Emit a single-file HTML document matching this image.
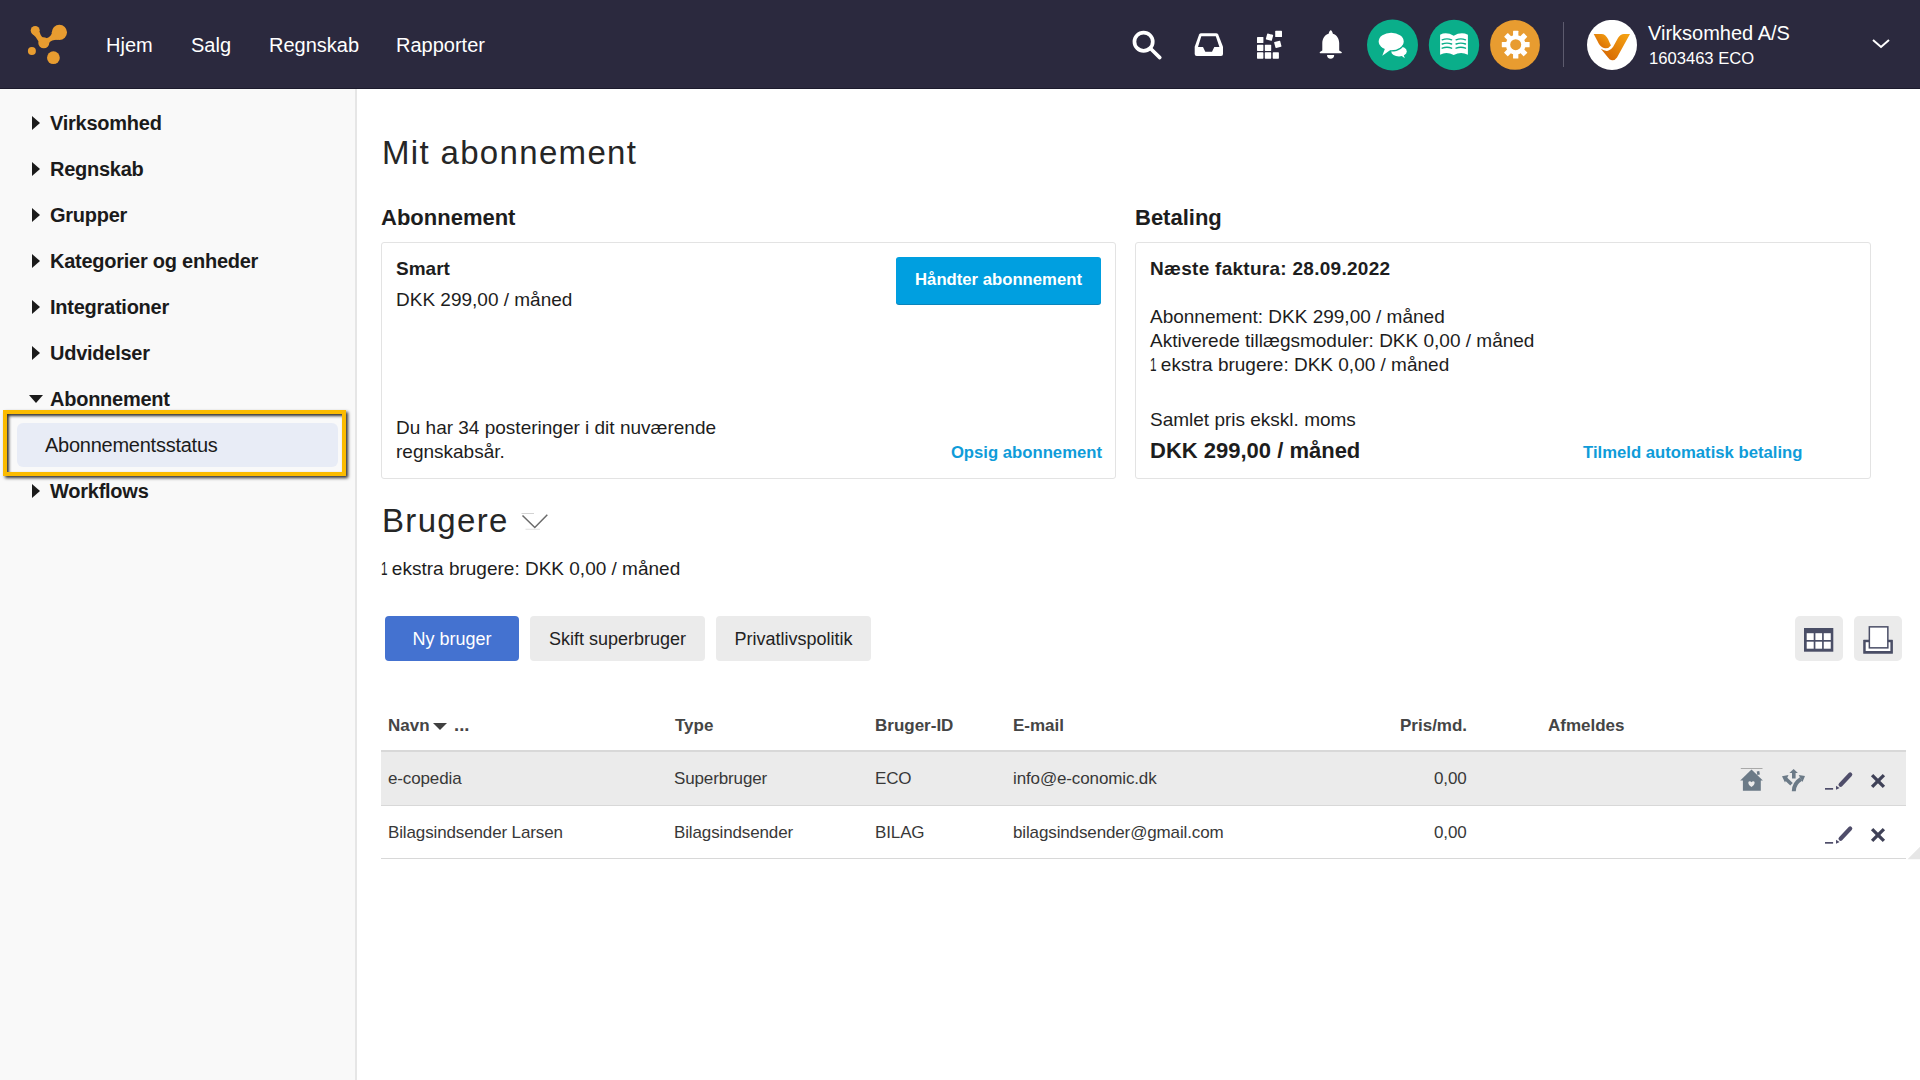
<!DOCTYPE html>
<html><head><meta charset="utf-8">
<style>
*{box-sizing:border-box;margin:0;padding:0}
html,body{width:1920px;height:1080px;overflow:hidden;background:#fff;font-family:"Liberation Sans",sans-serif;color:#1f1f1f}
.abs{position:absolute;white-space:nowrap}
#hdr{position:absolute;left:0;top:0;width:1920px;height:89px;background:#2b293e;border-bottom:1px solid #1c1a2c}
.nav{position:absolute;top:33px;font-size:20px;color:#fff;line-height:24px}
#side{position:absolute;left:0;top:89px;width:357px;height:991px;background:#f9f9f9;border-right:2px solid #e6e6e6}
.si{position:absolute;left:50px;font-size:20px;font-weight:bold;color:#1b1b1b;line-height:24px;letter-spacing:-0.25px}
.tri{position:absolute;left:32px;width:0;height:0;border-top:7px solid transparent;border-bottom:7px solid transparent;border-left:8px solid #1b1b1b}
.trid{position:absolute;left:28.5px;width:0;height:0;border-left:7.3px solid transparent;border-right:7.3px solid transparent;border-top:8.5px solid #1b1b1b}
.t{position:absolute;white-space:nowrap;line-height:24px}
.card{position:absolute;top:242px;height:237px;border:1px solid #e3e3e3;border-radius:3px;background:#fff}
.link{color:#0f9cd9;font-weight:bold;font-size:16.7px}
.btn{position:absolute;top:616px;height:45px;border-radius:4px;font-size:18px;line-height:47px;text-align:center}
.th{position:absolute;top:716px;font-size:17px;font-weight:bold;color:#454545;line-height:20px}
.td{position:absolute;font-size:17px;color:#383838;line-height:20px;letter-spacing:-0.13px}
</style></head>
<body>
<div id="hdr">
  <!-- logo -->
  <svg class="abs" style="left:20px;top:18px" width="56" height="52" viewBox="0 0 56 52">
    <g fill="#e89c30">
      <circle cx="15.2" cy="12.5" r="4.5"/>
      <circle cx="39.4" cy="14.3" r="7.6"/>
      <circle cx="23.8" cy="24.8" r="5.5"/>
      <circle cx="11.9" cy="33" r="4"/>
      <circle cx="33.4" cy="39.7" r="6.4"/>
      <path d="M12 15.5 Q16 18.5 18.6 23.5 L28.9 25 Q32 21.3 38.5 21.8 L32.2 13.5 Q31.6 18.5 26.5 20.3 Q21.5 21 19.6 14 Z"/>
    </g>
  </svg>
  <div class="nav" style="left:106px">Hjem</div>
  <div class="nav" style="left:191px">Salg</div>
  <div class="nav" style="left:269px">Regnskab</div>
  <div class="nav" style="left:396px">Rapporter</div>

  <!-- search -->
  <svg class="abs" style="left:1130px;top:28px" width="34" height="34" viewBox="0 0 34 34">
    <circle cx="13.6" cy="13.7" r="9.15" fill="none" stroke="#fff" stroke-width="3.7"/>
    <line x1="20.5" y1="20.5" x2="29.8" y2="29.6" stroke="#fff" stroke-width="3.6" stroke-linecap="round"/>
  </svg>
  <!-- inbox -->
  <svg class="abs" style="left:1192px;top:30px" width="34" height="30" viewBox="0 0 34 30">
    <path d="M9.3 3.2 H24 Q25.6 3.2 26.2 4.6 L31 16.7 V24 Q31 26 29 26 H4.7 Q2.7 26 2.7 24 V16.7 L7.1 4.6 Q7.7 3.2 9.3 3.2 Z" fill="#fff"/>
    <path d="M9.3 6.3 H23.8 L27.4 17 H22.3 L20 21.7 H13.3 L11 17 H6 Z" fill="#2b293e"/>
  </svg>
  <!-- grid -->
  <svg class="abs" style="left:1254px;top:29px" width="32" height="32" viewBox="0 0 32 32">
    <g fill="#fff">
      <rect x="3" y="8" width="6.4" height="6.1" rx="0.6"/>
      <rect x="3" y="15.8" width="6.4" height="6.1" rx="0.6"/>
      <rect x="3" y="23.3" width="6.4" height="6.4" rx="0.6"/>
      <rect x="10.8" y="15.8" width="6.4" height="6.1" rx="0.6"/>
      <rect x="10.8" y="23.3" width="6.4" height="6.4" rx="0.6"/>
      <rect x="18.7" y="23.3" width="6.2" height="6.4" rx="0.6"/>
      <rect x="21.2" y="1.7" width="6.8" height="6.3" rx="0.6"/>
      <rect x="12.4" y="5.1" width="6.2" height="6.2" rx="0.6" transform="rotate(15 15.5 8.2)"/>
      <rect x="20.7" y="12.2" width="6.2" height="6.2" rx="0.6" transform="rotate(-15 23.8 15.3)"/>
    </g>
  </svg>
  <!-- bell -->
  <svg class="abs" style="left:1316px;top:29px" width="30" height="32" viewBox="0 0 30 32">
    <path d="M12.6 4.7 C13.2 2.5 13.9 1.3 14.75 1.3 C15.6 1.3 16.3 2.5 16.9 4.7 C20.8 6 23.2 9.5 23.2 14 V21.5 L25.6 23 Q26.4 24.2 25 24.2 H4.5 Q3.1 24.2 3.9 23 L6.3 21.5 V14 C6.3 9.5 8.7 6 12.6 4.7 Z" fill="#fff"/>
    <path d="M11 26 H18.2 Q18 29.8 14.6 29.8 Q11.2 29.8 11 26 Z" fill="#fff"/>
  </svg>
  <!-- chat circle -->
  <svg class="abs" style="left:1366px;top:19px" width="54" height="52" viewBox="0 0 54 52">
    <circle cx="26.5" cy="26" r="25.5" fill="#0aae8a"/>
    <ellipse cx="33" cy="32.4" rx="7.75" ry="5" fill="#fff"/>
    <path d="M34.5 36 L38.8 39.3 L37.6 35.5 Z" fill="#fff"/>
    <ellipse cx="25.2" cy="22.5" rx="13.9" ry="10.1" fill="#0aae8a"/>
    <ellipse cx="25.2" cy="22.5" rx="12.5" ry="8.75" fill="#fff"/>
    <path d="M19 29.5 L16.3 36.8 L25 30.6 Z" fill="#fff"/>
  </svg>
  <!-- book circle -->
  <svg class="abs" style="left:1427px;top:19px" width="54" height="52" viewBox="0 0 54 52">
    <circle cx="27" cy="26" r="25.2" fill="#0aae8a"/>
    <path d="M13.1 15.7 Q19.5 12.5 26.7 16.8 Q33.9 12.5 40.9 15.7 V35.7 Q33.9 32.3 26.7 36 Q19.5 32.3 13.1 35.7 Z" fill="#fff"/>
    <g stroke="#0aae8a" stroke-width="1.4" fill="none" stroke-linecap="round">
      <path d="M15.2 20.8 Q20 19 24.6 20.8"/><path d="M15.2 25 Q20 23.2 24.6 25"/><path d="M15.2 29.2 Q20 27.4 24.6 29.2"/>
      <path d="M29.1 20.8 Q33.8 19 38.5 20.8"/><path d="M29.1 25 Q33.8 23.2 38.5 25"/><path d="M29.1 29.2 Q33.8 27.4 38.5 29.2"/>
    </g>
  </svg>
  <!-- gear circle -->
  <svg class="abs" style="left:1489px;top:19px" width="52" height="52" viewBox="0 0 52 52">
    <circle cx="26" cy="25.9" r="24.9" fill="#e89c30"/>
    <g fill="#fff" transform="translate(26.7 25.7)">
      <rect x="-2.65" y="-13.9" width="5.3" height="27.8" rx="0.5"/>
      <rect x="-2.65" y="-13.9" width="5.3" height="27.8" rx="0.5" transform="rotate(45)"/>
      <rect x="-2.65" y="-13.9" width="5.3" height="27.8" rx="0.5" transform="rotate(90)"/>
      <rect x="-2.65" y="-13.9" width="5.3" height="27.8" rx="0.5" transform="rotate(135)"/>
      <circle r="9.8"/>
      <circle r="5.5" fill="#e89c30"/>
    </g>
  </svg>
  <div class="abs" style="left:1563px;top:22px;width:1px;height:45px;background:#5d5b6e"></div>
  <!-- avatar -->
  <svg class="abs" style="left:1586px;top:20px" width="52" height="51" viewBox="0 0 52 51">
    <defs><linearGradient id="og" x1="1" y1="0" x2="0" y2="1"><stop offset="0" stop-color="#f7a614"/><stop offset="1" stop-color="#d25f00"/></linearGradient></defs>
    <circle cx="26" cy="24.9" r="25" fill="#fff"/>
    <path d="M7.7 13.9 H15.5 Q19.5 14 22 19 L24.9 25.5 Q23 28.5 19 28.2 Q15 27.5 13 24 Z" fill="url(#og)"/>
    <path d="M14.8 28.8 Q19 31.5 22 30.8 Q25 30 27 27 L32 18 Q34.5 14 38 13.9 H44 L31 37.5 Q29 40.5 26 40.2 Q23.5 40 22 37.5 Z" fill="url(#og)"/>
  </svg>
  <div class="abs" style="left:1648px;top:21px;font-size:20px;color:#fff;line-height:24px">Virksomhed A/S</div>
  <div class="abs" style="left:1649px;top:49px;font-size:16.6px;color:#fff;line-height:20px">1603463 ECO</div>
  <svg class="abs" style="left:1871px;top:37px" width="20" height="14" viewBox="0 0 20 14">
    <path d="M2 3 L10 10 L18 3" fill="none" stroke="#fff" stroke-width="2"/>
  </svg>
</div>

<div id="side">
  <div class="tri" style="top:27px"></div><div class="si" style="top:22px">Virksomhed</div>
  <div class="tri" style="top:73px"></div><div class="si" style="top:68px">Regnskab</div>
  <div class="tri" style="top:119px"></div><div class="si" style="top:114px">Grupper</div>
  <div class="tri" style="top:165px"></div><div class="si" style="top:160px">Kategorier og enheder</div>
  <div class="tri" style="top:211px"></div><div class="si" style="top:206px">Integrationer</div>
  <div class="tri" style="top:257px"></div><div class="si" style="top:252px">Udvidelser</div>
  <div class="trid" style="top:306px"></div><div class="si" style="top:298px">Abonnement</div>
  <div class="tri" style="top:395px"></div><div class="si" style="top:390px">Workflows</div>
</div>
<!-- highlight -->
<div class="abs" style="left:3px;top:410px;width:343px;height:66px;border:4px solid #fbbb00;box-shadow:2px 2px 3px rgba(0,0,0,.8), inset 2px 2px 3px rgba(0,0,0,.8);"></div>
<div class="abs" style="left:17px;top:423px;width:321px;height:44px;background:#e8ecf6;border-radius:6px"></div>
<div class="t" style="left:45px;top:433px;font-size:20px;letter-spacing:-0.25px;color:#1b1b1b">Abonnementsstatus</div>

<!-- main -->
<div class="t" style="left:382px;top:132px;font-size:33px;letter-spacing:1.33px;line-height:42px;color:#262626">Mit abonnement</div>
<div class="t" style="left:381px;top:206px;font-size:22px;font-weight:bold;color:#1d1d1d">Abonnement</div>
<div class="t" style="left:1135px;top:206px;font-size:22px;font-weight:bold;color:#1d1d1d">Betaling</div>

<div class="card" style="left:381px;width:735px"></div>
<div class="t" style="left:396px;top:257px;font-size:19px;font-weight:bold;color:#1d1d1d">Smart</div>
<div class="t" style="left:396px;top:288px;font-size:19px;color:#1d1d1d">DKK 299,00 / måned</div>
<div class="abs" style="left:896px;top:257px;width:205px;height:47px;background:#009fe0;border-radius:3px;box-shadow:0 1px 0 #0a84bb;color:#fff;font-weight:bold;font-size:16.7px;line-height:46px;text-align:center">Håndter abonnement</div>
<div class="t" style="left:396px;top:416px;font-size:19px;color:#1d1d1d">Du har 34 posteringer i dit nuværende</div>
<div class="t" style="left:396px;top:440px;font-size:19px;color:#1d1d1d">regnskabsår.</div>
<div class="t link" style="right:818px;top:441px">Opsig abonnement</div>

<div class="card" style="left:1135px;width:736px"></div>
<div class="t" style="left:1150px;top:257px;font-size:19px;font-weight:bold;letter-spacing:0.28px;color:#1d1d1d">Næste faktura: 28.09.2022</div>
<div class="t" style="left:1150px;top:305px;font-size:19px;color:#1d1d1d">Abonnement: DKK 299,00 / måned</div>
<div class="t" style="left:1150px;top:329px;font-size:19px;color:#1d1d1d">Aktiverede tillægsmoduler: DKK 0,00 / måned</div>
<div class="t" style="left:1150px;top:353px;font-size:19px;color:#1d1d1d"><span style="display:inline-block;width:5.6px;transform:scaleX(.62);transform-origin:0 0">1</span> ekstra brugere: DKK 0,00 / måned</div>
<div class="t" style="left:1150px;top:408px;font-size:19px;color:#1d1d1d">Samlet pris ekskl. moms</div>
<div class="t" style="left:1150px;top:439px;font-size:22px;font-weight:bold;color:#1d1d1d">DKK 299,00 / måned</div>
<div class="t link" style="left:1583px;top:441px">Tilmeld automatisk betaling</div>

<div class="t" style="left:382px;top:500px;font-size:33px;letter-spacing:1.33px;line-height:42px;color:#262626">Brugere</div>
<svg class="abs" style="left:520px;top:511px" width="30" height="21" viewBox="0 0 30 21">
  <path d="M2.5 4.5 L14.8 16.5 L27.3 3.8" fill="none" stroke="#6a6a6a" stroke-width="1.5"/>
  <rect x="1.5" y="2" width="12.5" height="0.8" fill="#c8c8c8"/>
  <rect x="5.5" y="17.8" width="14.5" height="0.8" fill="#d8d8d8"/>
</svg>
<div class="t" style="left:381px;top:557px;font-size:19px;color:#1d1d1d"><span style="display:inline-block;width:5.6px;transform:scaleX(.62);transform-origin:0 0">1</span> ekstra brugere: DKK 0,00 / måned</div>

<div class="btn" style="left:385px;width:134px;background:#4472d0;color:#fff">Ny bruger</div>
<div class="btn" style="left:530px;width:175px;background:#ebebeb;color:#222">Skift superbruger</div>
<div class="btn" style="left:716px;width:155px;background:#ebebeb;color:#222">Privatlivspolitik</div>

<!-- icon buttons -->
<svg class="abs" style="left:1795px;top:616px" width="108" height="46" viewBox="0 0 108 46">
  <rect x="0" y="0" width="48" height="45" rx="5" fill="#ebebeb"/>
  <rect x="59" y="0" width="48" height="45" rx="5" fill="#ebebeb"/>
  <g fill="#4a4e66">
    <rect x="9" y="12" width="29.3" height="23.7"/>
  </g>
  <g fill="#fff">
    <rect x="11.7" y="17.2" width="7" height="6.8"/>
    <rect x="20.4" y="17.2" width="6.7" height="6.8"/>
    <rect x="28.75" y="17.2" width="7" height="6.8"/>
    <rect x="11.7" y="25.7" width="7" height="7"/>
    <rect x="20.4" y="25.7" width="6.7" height="7"/>
    <rect x="28.75" y="25.7" width="7" height="7"/>
  </g>
  <rect x="68.2" y="23.8" width="29.7" height="13.95" rx="0.5" fill="#4a4e66"/>
  <rect x="70.7" y="26.2" width="24.7" height="8.8" fill="#fff"/>
  <rect x="74.35" y="10.85" width="18.5" height="21" fill="#fff" stroke="#4a4e66" stroke-width="1.5"/>
</svg>


<svg class="abs" style="left:1905px;top:845px" width="15" height="15" viewBox="0 0 15 15">
  <path d="M2.5 14.2 L15 1.7 V14.2 Z" fill="#e6e6e6"/>
</svg>

<!-- table -->
<div class="th" style="left:388px">Navn</div>
<div class="abs" style="left:433px;top:723px;border-left:7px solid transparent;border-right:7px solid transparent;border-top:7px solid #404040"></div>
<div class="th" style="left:454px;font-size:18.5px;top:715px">...</div>
<div class="th" style="left:675px">Type</div>
<div class="th" style="left:875px">Bruger-ID</div>
<div class="th" style="left:1013px">E-mail</div>
<div class="th" style="left:1400px">Pris/md.</div>
<div class="th" style="left:1548px">Afmeldes</div>
<div class="abs" style="left:381px;top:750px;width:1525px;height:2px;background:#d8d8d8"></div>
<div class="abs" style="left:381px;top:752px;width:1525px;height:53px;background:#ebebeb"></div>
<div class="abs" style="left:381px;top:805px;width:1525px;height:1px;background:#d8d8d8"></div>
<div class="abs" style="left:381px;top:858px;width:1525px;height:1px;background:#d8d8d8"></div>
<div class="td" style="left:388px;top:769px">e-copedia</div>
<div class="td" style="left:674px;top:769px">Superbruger</div>
<div class="td" style="left:875px;top:769px">ECO</div>
<div class="td" style="left:1013px;top:769px">info@e-conomic.dk</div>
<div class="td" style="left:1434px;top:769px">0,00</div>
<div class="td" style="left:388px;top:823px">Bilagsindsender Larsen</div>
<div class="td" style="left:674px;top:823px">Bilagsindsender</div>
<div class="td" style="left:875px;top:823px">BILAG</div>
<div class="td" style="left:1013px;top:823px">bilagsindsender@gmail.com</div>
<div class="td" style="left:1434px;top:823px">0,00</div>
<!-- row icons -->
<svg class="abs" style="left:1735px;top:762px" width="160" height="100" viewBox="0 0 160 100">
  <g fill="#6b7a87">
    <rect x="5.8" y="6.1" width="21.7" height="0.8" fill="#999"/>
    <path d="M16.5 7.5 L27.9 18.5 H5.2 Z"/>
    <rect x="22" y="9.2" width="2.6" height="3.6" transform="rotate(-10 23.3 11)"/>
    <rect x="7.9" y="18" width="17.9" height="10.75"/>
  </g>
  <path d="M16.5 25 C12.8 22.6 12.6 19.2 14.7 19.2 Q15.8 19.2 16.5 20.3 Q17.2 19.2 18.3 19.2 C20.4 19.2 20.2 22.6 16.5 25 Z" fill="#ebebeb"/>
  <g fill="#6b7a87" stroke="none">
    <path d="M58.6 6.9 L62.9 11 H54.4 Z"/>
    <path d="M47 14.2 L53.5 13 L50 20.5 Z"/>
    <path d="M70 14 L63.7 12.9 L67.5 20 Z"/>
  </g>
  <g fill="none" stroke="#6b7a87" stroke-width="3.6">
    <line x1="58.8" y1="10.5" x2="58.8" y2="16.5"/>
    <line x1="50.5" y1="16.5" x2="56.5" y2="22.3"/>
    <path d="M66 17 Q58.8 21.5 58.8 29.2" stroke-width="4"/>
  </g>
  <g id="pe">
    <rect x="90" y="26" width="8.1" height="1.7" fill="#4f4d6a"/>
    <path d="M101 23.75 L104.6 26 L101 27.7 Z" fill="#4f4d6a"/>
    <line x1="105.6" y1="22.7" x2="115.2" y2="12.5" stroke="#4f4d6a" stroke-width="4.2" stroke-linecap="round"/>
    <g stroke="#3f4157" stroke-width="3.3">
      <line x1="137.1" y1="13.1" x2="148.9" y2="24.9"/>
      <line x1="148.9" y1="13.1" x2="137.1" y2="24.9"/>
    </g>
  </g>
  <use href="#pe" y="54"/>
</svg>
</body></html>
